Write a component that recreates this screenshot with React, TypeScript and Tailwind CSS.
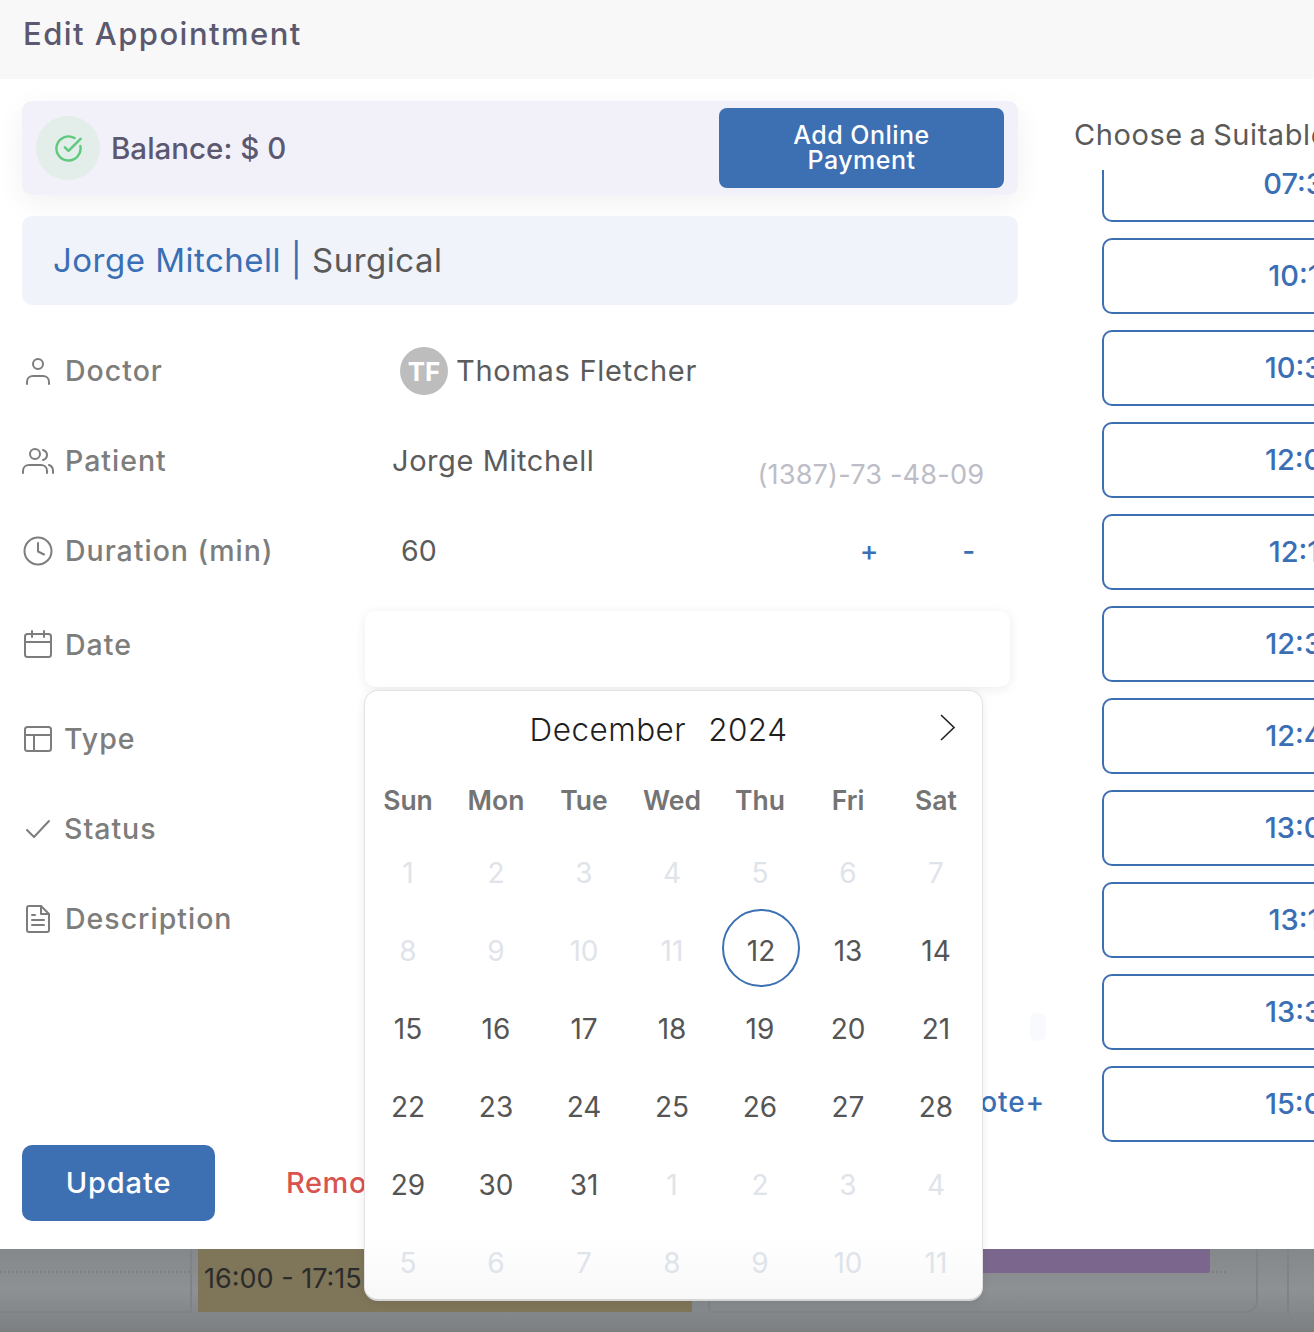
import React from 'react';
import { CircleCheckBig } from 'lucide-react';

const FONT = 'font-[Inter,"Open_Sans",sans-serif]';

const SLOTS = ['07:30', '10:15', '10:30', '12:00', '12:15', '12:30', '12:45', '13:00', '13:15', '13:30', '15:00'];
const WEEK = ['Sun', 'Mon', 'Tue', 'Wed', 'Thu', 'Fri', 'Sat'];

// [label, muted]
const DAYS: [number, boolean][] = [
  ...[1, 2, 3, 4, 5, 6, 7, 8, 9, 10, 11].map((d): [number, boolean] => [d, true]),
  ...Array.from({ length: 20 }, (_, i): [number, boolean] => [i + 12, false]),
  ...[1, 2, 3, 4, 5, 6, 7, 8, 9, 10, 11].map((d): [number, boolean] => [d, true]),
];

function Icon({ children }: { children: React.ReactNode }) {
  return (
    <svg width="32" height="32" viewBox="0 0 32 32" fill="none" stroke="#7d7d7b" strokeWidth="2" strokeLinecap="round" strokeLinejoin="round" className="shrink-0">
      {children}
    </svg>
  );
}

function Row({ h, icon, label, children, gap = 'ml-[11px]' }: { h: string; icon: React.ReactNode; label: string; children?: React.ReactNode; gap?: string }) {
  return (
    <div className={`flex items-center ${h}`}>
      <Icon>{icon}</Icon>
      <span className={`${gap} text-[28.5px] font-medium tracking-[0.035em] text-[#7d7d7b] w-[327px] shrink-0`}>{label}</span>
      {children}
    </div>
  );
}

function Calendar() {
  return (
    <div className="absolute left-[364px] top-[690px] w-[619px] h-[611px] rounded-[14px] bg-gradient-to-b from-white from-90% to-[#f8f8f8] border border-[#e3e3e3] border-b-[2px] border-b-[#d4d4d4] shadow-[0_2px_10px_rgba(0,0,0,0.08)]">
      <div className="relative h-[77px] flex items-center justify-center pr-[30px] text-[31.5px] tracking-[0.015em] font-light text-[#1f1f1f]">
        <span>December</span>
        <span className="ml-[22px]">2024</span>
        <svg className="absolute left-[574px] top-[22px]" width="18" height="30" viewBox="0 0 18 30" fill="none" stroke="#222" strokeWidth="1.6">
          <path d="M2 2l13 12.5L2 27" />
        </svg>
      </div>
      <div className="grid grid-cols-[repeat(7,88px)] -ml-[1px] h-[66px] items-center text-center text-[26.5px] font-semibold text-[#747474]">
        {WEEK.map((w) => (
          <span key={w}>{w}</span>
        ))}
      </div>
      <div className="grid grid-cols-[repeat(7,88px)] -ml-[1px] auto-rows-[78px] text-center text-[28px]">
        {DAYS.map(([d, muted], i) => (
          <div key={i} className={`flex items-center justify-center ${muted ? 'text-[#dfe3ea]' : 'text-[#555555]'}`}>
            <span className={d === 12 && !muted ? 'flex items-center justify-center w-[78px] h-[78px] pt-[6px] -translate-y-[3px] translate-x-[1px] rounded-full border-2 border-[#3d70b2]' : ''}>{d}</span>
          </div>
        ))}
      </div>
    </div>
  );
}

export default function App() {
  return (
    <div className={`relative w-[1314px] h-[1332px] overflow-hidden bg-white ${FONT}`}>
      {/* Header */}
      <div className="h-[79px] bg-[#f8f8f9] pl-[23px] pt-[14px] text-[31px] leading-[40px] tracking-[0.047em] font-medium text-[#5b5870]">Edit Appointment</div>

      <div className="flex h-[1170px]">
        {/* Left column */}
        <div className="w-[996px] ml-[22px] shrink-0 pt-[22px]">
          <div className="h-[94px] rounded-[10px] bg-[#f2f1fa] shadow-[0_8px_30px_rgba(0,0,0,0.06)] flex items-center pl-[14px] pr-[14px]">
            <div className="w-[64px] h-[64px] rounded-full bg-[#e3edea] flex items-center justify-center">
              <CircleCheckBig size={29} color="#5fc97e" strokeWidth={2} />
            </div>
            <span className="ml-[11px] text-[29.5px] font-medium text-[#5b5870]">Balance: $ 0</span>
            <button className="ml-auto w-[285px] h-[80px] rounded-[8px] bg-[#3d70b2] text-white text-[25px] leading-[25px] font-medium tracking-[0.02em]">
              Add Online
              <br />
              Payment
            </button>
          </div>

          <div className="mt-[21px] h-[89px] rounded-[10px] bg-[#f0f3f9] flex items-center pl-[31px] text-[33px] tracking-[0.015em] whitespace-pre">
            <span className="text-[#3a6fb5]">Jorge Mitchell | </span>
            <span className="text-[#5a5a5a]">Surgical</span>
          </div>

          <div className="mt-[21px]">
            <Row
              h="h-[90px]"
              label="Doctor"
              icon={
                <>
                  <circle cx="16" cy="9" r="5" />
                  <path d="M5 29v-2c0-4 3-6 6-6h10c3 0 6 2 6 6v2" />
                </>
              }
            >
              <div className="ml-[8px] w-[48px] h-[48px] rounded-full bg-[#bdbdbd] flex items-center justify-center text-white text-[26px] font-bold">TF</div>
              <span className="ml-[8px] text-[29px] tracking-[0.025em] text-[#5b5b5b]">Thomas Fletcher</span>
            </Row>
            <Row
              h="h-[90px]"
              label="Patient"
              icon={
                <>
                  <circle cx="13" cy="9" r="5" />
                  <path d="M1 28v-2c0-4 3-6 6-6h12c3 0 6 2 6 6v2" />
                  <path d="M21 5c3 1 4 3 4 5s-1 4-4 5" />
                  <path d="M27 20c3 1 4 3 4 6v2" />
                </>
              }
            >
              <span className="text-[29px] tracking-[0.02em] text-[#5b5b5b]">Jorge Mitchell</span>
              <span className="ml-[163px] mt-[28px] text-[27.2px] tracking-[0.005em] text-[#bcbdc6]">(1387)-73 -48-09</span>
            </Row>
            <Row
              h="h-[90px]"
              label="Duration (min)"
              icon={
                <>
                  <circle cx="16" cy="16" r="13.5" />
                  <path d="M16 8v8.5l6 3" />
                </>
              }
            >
              <span className="ml-[9px] text-[28.5px] text-[#5b5b5b]">60</span>
              <span className="ml-[423px] text-[28px] font-medium text-[#3a6fb5]">+</span>
              <span className="ml-[84px] text-[28px] font-medium text-[#3a6fb5]">-</span>
            </Row>
            <Row
              h="h-[98px]"
              label="Date"
              icon={
                <>
                  <rect x="3" y="5" width="26" height="23" rx="2.5" />
                  <path d="M3 13h26M10 2v6M22 2v6" />
                </>
              }
            >
              <div className="-ml-[27px] mt-[8px] w-[645px] h-[76px] rounded-[10px] bg-white shadow-[0_2px_12px_rgba(0,0,0,0.08)] shrink-0" />
            </Row>
            <Row
              h="h-[90px]"
              label="Type"
              gap="ml-[10px]"
              icon={
                <>
                  <rect x="3" y="4" width="26" height="24" rx="2.5" />
                  <path d="M3 12h26M12 12v16" />
                </>
              }
            />
            <Row h="h-[90px]" label="Status" gap="ml-[10px]" icon={<path d="M5 17l7 7L27 8" />} />
            <Row
              h="h-[90px]"
              label="Description"
              icon={
                <>
                  <path d="M19 3H7a2 2 0 0 0-2 2v22a2 2 0 0 0 2 2h18a2 2 0 0 0 2-2V11z" />
                  <path d="M19 3v8h8M10 17h12M10 22h12M10 12h3" />
                </>
              }
            />
          </div>

          <div className="h-[158px] relative">
            <div className="absolute left-[1008px] top-[49px] w-[16px] h-[28px] rounded-[6px] bg-[#f9fafd]" />
          </div>

          <div className="flex justify-end -mr-[27px] h-[36px] items-center -mt-[38px] text-[28px] tracking-[0.03em] font-medium text-[#3a6fb5]">
            <span>Add Note+</span>
          </div>

          <div className="mt-[25px] flex items-center">
            <button className="w-[193px] h-[76px] rounded-[10px] bg-[#3d70b2] text-white text-[29px] font-medium tracking-[0.03em]">Update</button>
            <span className="ml-[71px] text-[29px] font-medium tracking-[0.02em] text-[#d9534f]">Remove</span>
          </div>
        </div>

        {/* Right column */}
        <div className="ml-[56px] pt-[39px] shrink-0">
          <div className="text-[29px] leading-[34px] tracking-[0.02em] [word-spacing:-2px] text-[#5a5a5a] whitespace-nowrap">Choose a Suitable Time</div>
          <div className="mt-[18px] ml-[28px] w-[402px] h-[973px] overflow-hidden">
            <div className="flex flex-col gap-[16px] -mt-[24px]">
              {SLOTS.map((s) => (
                <div key={s} className="h-[76px] shrink-0 rounded-[10px] border-2 border-[#3d70b2] flex items-center justify-center text-[29px] font-medium text-[#3a6fb5]">
                  {s}
                </div>
              ))}
            </div>
          </div>
        </div>
      </div>

      {/* Dimmed page behind the modal */}
      <div className="h-[83px] bg-gradient-to-b from-[#85888a] via-[#8e9193] via-50% to-[#7c7f82] flex">
        <div className="w-[192px] shrink-0 h-[64px] border-r-2 border-b-2 border-[#808386] pt-[22px]">
          <div className="border-t-2 border-dotted border-[#7d8083]" />
        </div>
        <div className="ml-[6px] w-[494px] shrink-0 h-[63px] bg-[#7f7559] pl-[6px] pt-[10px] text-[27px] leading-[40px] text-[#2b2b2b]">16:00 - 17:15</div>
        <div className="ml-[16px] w-[550px] shrink-0 h-[64px] border-x-2 border-b-2 border-[#808386] rounded-br-[12px] flex items-start">
          <div className="ml-[100px] w-[400px] h-[24px] bg-[#7b678e] rounded-b-[2px]" />
          <div className="mt-[22px] ml-[2px] w-[14px] border-t-2 border-dotted border-[#7d8083]" />
        </div>
        <div className="ml-[29px] w-[40px] shrink-0 h-[74px] border-l-2 border-b-2 border-[#808386] rounded-bl-[12px]" />
      </div>

      <Calendar />
    </div>
  );
}
